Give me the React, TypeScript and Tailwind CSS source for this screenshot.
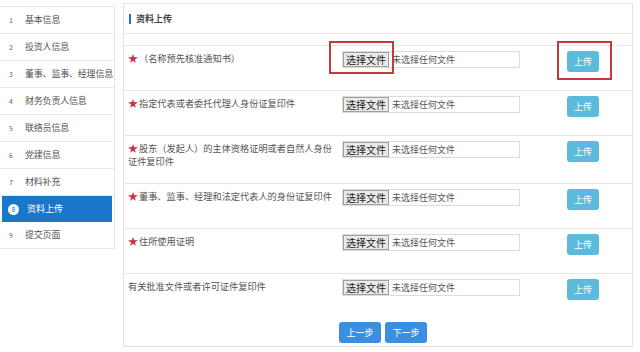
import { type ReactNode } from 'react'

const STEPS = ['基本信息', '投资人信息', '董事、监事、经理信息', '财务负责人信息', '联络员信息', '党建信息', '材料补充', '资料上传', '提交页面']

type Row = { label: string; required: boolean; h: string; mark?: boolean }

const ROWS: Row[] = [
  { label: '（名称预先核准通知书）', required: true, h: 'h-[45px]', mark: true },
  { label: '指定代表或者委托代理人身份证复印件', required: true, h: 'h-[45px]' },
  { label: '股东（发起人）的主体资格证明或者自然人身份证件复印件', required: true, h: 'h-[48px]' },
  { label: '董事、监事、经理和法定代表人的身份证复印件', required: true, h: 'h-[45px]' },
  { label: '住所使用证明', required: true, h: 'h-[45px]' },
  { label: '有关批准文件或者许可证件复印件', required: false, h: 'h-[43px]' },
]

function Highlight({ className, children }: { className: string; children: ReactNode }) {
  return (
    <div className="relative">
      {children}
      <div className={`pointer-events-none absolute border-2 border-[#c23a3a] ${className}`} />
    </div>
  )
}

function FileInput() {
  return (
    <div className="flex h-[17px] w-[178px] items-center border border-[#dcdcdc] bg-white">
      <span className="flex h-[15px] w-[46px] items-center justify-center border border-[#a0a0a0] bg-[#e9e9e9] text-[10px] text-[#222]">
        选择文件
      </span>
      <span className="ml-[3px] text-[9px] text-[#555]">未选择任何文件</span>
    </div>
  )
}

function UploadButton() {
  return (
    <button className="flex h-[21px] w-[32px] items-center justify-center rounded-[3px] bg-[#5cbbdc] text-[9px] text-white">
      上传
    </button>
  )
}

export default function App() {
  return (
    <div className="flex h-[352px] w-[640px] overflow-hidden bg-white text-[#333] [font-family:'Noto_Sans_CJK_SC',sans-serif]">
      <aside className="w-[115px] shrink-0 pt-[6px]">
        <ul className="border-r border-t border-[#e3e3e3]">
          {STEPS.map((s, i) =>
            i === 7 ? (
              <li key={s} className="mx-[2px] flex h-[26px] items-center bg-[#1a76c9] pl-[6px] text-[9px] text-white">
                <span className="flex h-[11px] w-[11px] items-center justify-center rounded-full bg-white text-[7px] text-[#1a76c9]">
                  {i + 1}
                </span>
                <span className="ml-[8px]">{s}</span>
              </li>
            ) : (
              <li key={s} className="flex h-[27px] items-center border-b border-[#e8e8e8] pl-[9px] text-[9px] text-[#555]">
                <span className="w-[16px] text-[7px] text-[#666]">{i + 1}</span>
                <span className="whitespace-nowrap tracking-[-0.2px]">{s}</span>
              </li>
            ),
          )}
        </ul>
      </aside>

      <main className="ml-[8px] mt-[3px] flex h-[344px] w-[510px] flex-col border border-[#e2e2e2]">
        <div className="flex h-[30px] items-center border-b border-[#e6e6e6] pl-[5px]">
          <span className="h-[10px] w-[2px] bg-[#1a76c9]" />
          <span className="ml-[5px] text-[9px] font-bold text-[#444]">资料上传</span>
        </div>

        <div className="mt-[11px] border-t border-[#e6e6e6]">
          {ROWS.map((r, i) => (
            <div
              key={r.label}
              className={`flex ${r.h} ${i < ROWS.length - 1 ? 'border-b border-[#e6e6e6]' : ''}`}
            >
              <div className="w-[218px] pl-[4px] pr-[6px] pt-[6px] text-[9.2px] leading-[13px] text-[#555]">
                {r.required && <span className="mr-[1px] inline-block text-[10px] leading-[10px] text-[#c8324c]">★</span>}
                {r.label}
              </div>
              <div className="w-[225px] pt-[5px]">
                {r.mark ? (
                  <Highlight className="-left-[13px] -top-[10px] h-[33px] w-[65px]">
                    <FileInput />
                  </Highlight>
                ) : (
                  <FileInput />
                )}
              </div>
              <div className="pt-[5px]">
                {r.mark ? (
                  <Highlight className="-left-[10px] -top-[10px] h-[39px] w-[55px]">
                    <UploadButton />
                  </Highlight>
                ) : (
                  <UploadButton />
                )}
              </div>
            </div>
          ))}
        </div>

        <div className="mt-[5px] flex justify-center gap-[4px] pl-[10px]">
          <button className="h-[21px] w-[42px] rounded-[3px] bg-[#3b8fe0] text-[9px] text-white">上一步</button>
          <button className="h-[21px] w-[42px] rounded-[3px] bg-[#3b8fe0] text-[9px] text-white">下一步</button>
        </div>
      </main>
    </div>
  )
}
